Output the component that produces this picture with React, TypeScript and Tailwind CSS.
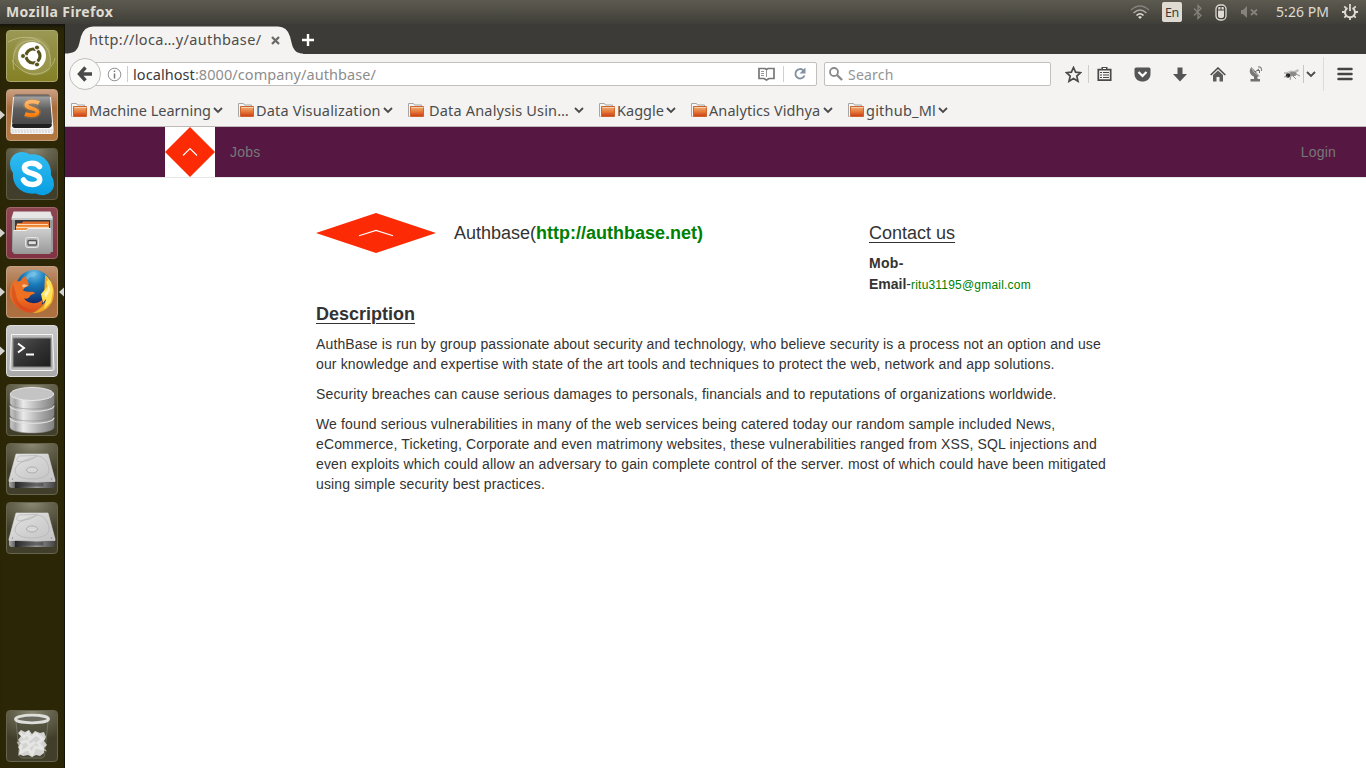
import type { ReactNode } from "react";

const ui = "font-['Noto_Sans',sans-serif]";

function Tile({ bg, border, left, right, children }: { bg: string; border: string; left?: boolean; right?: boolean; children: ReactNode }) {
  return (
    <div className="relative flex h-[52px] w-[65px] shrink-0 pl-[6px]">
      {left && (
        <svg className="absolute left-0 top-[21px]" width="5" height="10" viewBox="0 0 5 10"><path d="M0 0.5 5 5 0 9.5Z" fill="#d4d2cc" /></svg>
      )}
      {right && (
        <svg className="absolute right-[1px] top-[21px]" width="5" height="10" viewBox="0 0 5 10"><path d="M5 .5 0 5l5 4.500Z" fill="#d4d2cc" /></svg>
      )}
      <div className={`h-[52px] w-[52px] overflow-hidden rounded-[4px] border ${border} ${bg}`}>
        <svg className="-m-px block" width="52" height="52" viewBox="0 0 52 52">{children}</svg>
      </div>
    </div>
  );
}

const dark = "bg-[radial-gradient(ellipse_90%_60%_at_50%_0%,#8b8974_0%,#67654f_40%,#413f2b_100%)]";

function Drive({ id }: { id: string }) {
  return (
    <g>
      <defs>
        <linearGradient id={id + "a"} x1="0" y1="0" x2="1" y2="1"><stop offset="0" stopColor="#e6e6e6" /><stop offset=".5" stopColor="#d2d2d2" /><stop offset="1" stopColor="#c4c4c4" /></linearGradient>
        <linearGradient id={id + "b"}><stop offset="0" stopColor="#aaa" /><stop offset=".12" stopColor="#666" /><stop offset=".14" stopColor="#222" /><stop offset=".6" stopColor="#999" /><stop offset="1" stopColor="#444" /></linearGradient>
      </defs>
      <path d="M3 38h46v4q0 3-3 3H6q-3 0-3-3Z" fill={`url(#${id}b)`} />
      <path d="M9.500 40h28v3.500h-28Z" fill="#333" opacity=".5" />
      <path d="M10 11h32l7 26v1.500H3V37Z" fill={`url(#${id}a)`} stroke="#dedede" strokeWidth=".6" />
      <path d="M13 13q-4 4-1 5.500 4 .5 8-1.500t9-2.500l2-2Z" fill="none" stroke="#b5b5b5" strokeWidth=".7" />
      <path d="M9 28c0-6 7-10 15-11l7-4c7 0 12 7 12 15 0 5-8 8-17 8S9 33 9 28Z" fill="none" stroke="#b5b5b5" strokeWidth=".8" />
      <ellipse cx="26" cy="27" rx="5.500" ry="3" fill="#d8d8d8" stroke="#a5a5a5" strokeWidth=".8" />
      <circle cx="6.500" cy="36" r=".7" fill="#888" /><circle cx="45.500" cy="36" r=".7" fill="#888" />
    </g>
  );
}

function Launcher() {
  return (
    <nav className="flex w-[65px] shrink-0 flex-col gap-[7px] border-r border-[#15140a] bg-[#2b2706] pb-[6px] pt-[6px] shadow-[inset_0_6px_5px_-4px_#111]">
      <Tile bg="bg-[linear-gradient(#9a9854,#858025)]" border="border-[#aaa76a]">
        <path d="M7 24C9 4 35 0 44 18v22C32 50 12 47 7 24Z" fill="#b5b27a" opacity=".35" />
        <g fill="none" stroke="#cfcfa0" strokeWidth="1" opacity=".6">
          <path d="M2 12c22-12 46 0 42 24M8 40C4 20 14 6 34 12M49 28C45 46 20 52 6 30" />
        </g>
        <circle cx="26" cy="26" r="14" fill="#fff" />
        <circle cx="27" cy="26" r="7" fill="none" stroke="#57541c" strokeWidth="3.200" />
        <path d="M27 26h-9M27 26l5-8M27 26l5 8" stroke="#fff" strokeWidth="1.500" />
        <g fill="#57541c" stroke="#fff" strokeWidth="1"><circle cx="17" cy="26" r="2.500" /><circle cx="31" cy="17.500" r="2.500" /><circle cx="31" cy="34.500" r="2.500" /></g>
      </Tile>
      <Tile left bg="bg-[linear-gradient(#caa083,#a96d3b_35%,#b47841)]" border="border-[#c39a77]">
        <defs><linearGradient id="sub" x1="0" y1="0" x2="0" y2="1"><stop stopColor="#555" /><stop offset=".1" stopColor="#9c9c9c" /><stop offset=".5" stopColor="#5e5e5e" /><stop offset="1" stopColor="#484848" /></linearGradient><linearGradient id="ess" x1="0" y1="0" x2="0" y2="1"><stop stopColor="#ffb86b" /><stop offset="1" stopColor="#ff7e08" /></linearGradient></defs>
        <path d="M7 8h38l2.500 32v3q0 2-2 2h-39q-2 0-2-2v-3Z" fill="#f4f4f4" />
        <path d="M5.500 41h41M6 43h40" stroke="#bbb" strokeWidth=".8" strokeDasharray="2 1" />
        <path d="M8 31h36l2 5q-1 3-3 3H9q-3 0-3-3Z" fill="#202020" />
        <path d="M10 5.500h32q2 0 2 2L46 33q0 2-2 2H8q-2 0-2-2L8 7.500q0-2 2-2Z" fill="url(#sub)" />
        <path d="M33 14c-3-1.500-11-2.500-12.500 1-1.500 5 12 4 11 8.500-1 4-10 2.500-12.500 1.500" fill="none" stroke="#ff9c35" strokeWidth="7" opacity=".2" />
        <path d="M33 14c-3-1.500-11-2.500-12.500 1-1.500 5 12 4 11 8.500-1 4-10 2.500-12.500 1.500" fill="none" stroke="url(#ess)" strokeWidth="3.800" />
      </Tile>
      <Tile bg={dark} border="border-[#5f5c44]">
        <defs><linearGradient id="sky" x1="0" y1="0" x2="0" y2="1"><stop stopColor="#32bdf2" /><stop offset="1" stopColor="#079ee2" /></linearGradient></defs>
        <path d="M16 4q5 0 8 2.500C37 5 46 15 45 27q3 4 3 9c0 9-10 14-18 9.500C16 47 6 38 7 25q-3-4-3-9C4 9 9 4 16 4Z" fill="url(#sky)" />
        <path d="M33.500 18.500C30 14 17.500 14 18.500 20.500c.8 6 15.200 4 15.200 11 0 6.500-13 6.500-16.200.5" fill="none" stroke="white" strokeWidth="5.500" strokeLinecap="round" />
      </Tile>
      <Tile left bg="bg-[linear-gradient(#8d4651,#803242)]" border="border-[#a26671]">
        <defs><linearGradient id="cab" x1="0" y1="0" x2="0" y2="1"><stop stopColor="#d0d0d0" /><stop offset="1" stopColor="#989898" /></linearGradient></defs>
        <path d="M6 9h41v36H6Z" fill="#9a9a9a" /><path d="m5.500 11 2-6.500h37L46.500 11Z" fill="#e6e6e6" /><path d="M5.500 11h41v2h-41Z" fill="#c8c8c8" />
        <path d="M9 13h35v14H9Z" fill="#383838" /><path d="M11 16h5l1-1.500h26V26H10Z" fill="#e3702d" /><path d="M10 18.500h33V26H10Z" fill="#f3933c" /><path d="M11 17.500h31M10 20.500h33" stroke="#fbd9b5" />
        <path d="M7 23h13l2-2h23v24q0 2-2 2H9q-2 0-2-2Z" fill="url(#cab)" /><path d="M8 23.500h12.500l2-2H44" stroke="#eee" fill="none" />
        <rect x="19.500" y="30.500" width="13" height="10" rx="2" fill="#bbb" stroke="#e5e5e5" /><rect x="22" y="33.500" width="8.500" height="4.500" rx="1" fill="#e0e0e0" stroke="#555" strokeWidth="1.300" />
      </Tile>
      <Tile left right bg="bg-[linear-gradient(#bf9473,#a96b3b_45%,#ad7040)]" border="border-[#c59d7f]">
        <defs><radialGradient id="globe" cx=".5" cy=".1" r=".8"><stop stopColor="#6fbfe9" /><stop offset=".4" stopColor="#1779b8" /><stop offset="1" stopColor="#122c6c" /></radialGradient><linearGradient id="fox" x1="0" y1="0" x2="0" y2="1"><stop stopColor="#e8702a" /><stop offset=".6" stopColor="#f0701f" /><stop offset="1" stopColor="#dc4a1d" /></linearGradient></defs>
        <circle cx="28" cy="22" r="18" fill="url(#globe)" />
        <path d="M22 8q6-4 9 0l-3 3-4 0-2 3-3-2Z" fill="#7cc5e8" opacity=".6" />
        <path d="M39 9c6 5 9 11 9 18 0 12-9 20-21 20 8-4 14-10 15-19l-4 5Z" fill="#f5a623" />
        <path d="m39 8 6 8 2 8-2 12-7 7 2-10-3 4-2-9 7-8-2-4 2-2Z" fill="#ffe056" />
        <path d="m41 15 3 9-4 8-2-4 4-5Z" fill="#fff6b5" />
        <path d="M10 13q0 2 2 2.500l3-1q1-3 5-5 0 4 2 6l1 4c-2 1-5 2-6 5l3 1c5 1 7-1 9 2l-3 1c-3 1-2 5-8 4 4 6 14 6 19 1-1 8-7 12-12 13C15 47 4 37 4 27q0-9 6-14Z" fill="url(#fox)" />
        <path d="M7 18q-3 9 0 16 7 12 20 10c-10-1-16-7-17-16" fill="#ca3f20" opacity=".5" />
        <path d="M16 19q3-2 6 1l-5 1.500Z" fill="#fbc18b" />
      </Tile>
      <Tile left bg="bg-[linear-gradient(#c9c9c9,#a8a8a8)]" border="border-[#dddddd]">
        <defs><linearGradient id="term" x1="0" y1="0" x2="1" y2="1"><stop stopColor="#555" /><stop offset=".5" stopColor="#333" /><stop offset="1" stopColor="#1d1d1d" /></linearGradient></defs>
        <path d="M5.500 9.500h41l1.500 34q0 2-2 2H6q-2 0-2-2Z" fill="#bbb" stroke="#f4f4f4" /><rect x="7" y="13" width="38" height="29" fill="url(#term)" stroke="#8a8a8a" />
        <path d="m12 18.500 6 4.500-6 4.500" fill="none" stroke="#fff" strokeWidth="2" /><path d="M20 29.500h8" stroke="#fff" strokeWidth="1.800" />
      </Tile>
      <Tile bg={dark} border="border-[#66634d]">
        <defs><linearGradient id="disk"><stop stopColor="#c8c8c8" /><stop offset=".12" stopColor="#a8a8a8" /><stop offset=".3" stopColor="#eaeaea" /><stop offset=".65" stopColor="#b0b0b0" /><stop offset="1" stopColor="#808080" /></linearGradient></defs>
        <g fill="url(#disk)" stroke="#858585" strokeWidth=".5">
          <path d="M4 34v9c0 8 44 8 44 0v-9Z" /><path d="M4 22v9c0 8 44 8 44 0v-9Z" /><path d="M4 10v9c0 8 44 8 44 0v-9Z" />
        </g>
        <path d="M4 21.500c0 8 44 8 44 0M4 33.500c0 8 44 8 44 0" fill="none" stroke="#dedede" strokeWidth="1.200" />
        <ellipse cx="26" cy="10" rx="21.500" ry="6.500" fill="#c4c4c4" stroke="#e8e8e8" />
      </Tile>
      <Tile bg={dark} border="border-[#66634d]"><Drive id="d1" /></Tile>
      <Tile bg={dark} border="border-[#66634d]"><Drive id="d2" /></Tile>
      <div className="mt-auto">
        <Tile bg={dark} border="border-[#66634d]">
          <path d="M10 11h32l-3.500 35q-1 2-3 2h-19q-2 0-3-2Z" fill="#4c4b3b" opacity=".6" stroke="#96968c" strokeWidth=".8" />
          <path d="m12 23 3-3 4 2 4-2 3 4 3-3 5 2 4-1 2 5-2 4 3 4-3 3v5l-4 3-4-1-4 2-4-2-5 1-4-2 1-4-2-3 3-4-3-3 3-4Z" fill="#d2d2d0" />
          <path d="m14 23 4 4 4-4 2 6 6-5 7 5-5 4 5 6-8-2-3 7-4-6-8 5 1-7-2-3 8-2 3 5 5-4" fill="none" stroke="#f2f2f2" strokeWidth="3" opacity=".6" />
          <ellipse cx="26" cy="9" rx="16.500" ry="3.800" fill="#6b6b60" stroke="#dededa" strokeWidth="2.800" />
        </Tile>
      </div>
    </nav>
  );
}

function Folder() {
  return (
    <svg width="17" height="16" viewBox="0 0 17 16" className="shrink-0">
      <defs><linearGradient id="folder" x1="0" y1="0" x2="0" y2="1"><stop stopColor="#efb27d" /><stop offset=".5" stopColor="#e77b3b" /><stop offset="1" stopColor="#cc3d12" /></linearGradient></defs>
      <path d="M1.500 14.500h-1V1.500h5l1 1.500h7v2" fill="#f7f7f7" stroke="#a6a6a4" />
      <path d="M2.500 4.500h13v10h-13Z" fill="url(#folder)" stroke="#cd6430" /><path d="M3.500 5.500h12" stroke="#f5ceaa" />
    </svg>
  );
}

function Chevron() {
  return <svg width="10" height="7" viewBox="0 0 10 7" className="shrink-0"><path d="m1 1 4 4 4-4" fill="none" stroke="#4a4a4a" strokeWidth="1.800" /></svg>;
}

function Bookmark({ label, cell, text, pad = "pl-px" }: { label: string; cell: string; text: string; pad?: string }) {
  return (
    <div className={`flex shrink-0 items-center ${cell}`}>
      <Folder />
      <span className={`shrink-0 whitespace-nowrap pt-px ${pad} ${text}`}>{label}</span>
      <Chevron />
    </div>
  );
}

function Cell({ w, children }: { w: string; children: ReactNode }) {
  return <div className={`flex h-full shrink-0 items-center justify-center ${w}`}>{children}</div>;
}

function TopBar() {
  return (
    <header className={`flex h-6 items-center bg-[linear-gradient(#5d5b50,#3f3e38)] pl-[6px] text-[#dfdbd2] ${ui}`}>
      <span className="-mt-0.5 text-[14px] font-bold tracking-[0.38px]">Mozilla Firefox</span>
      <div className="ml-auto flex h-full w-[238px] shrink-0 items-center">
        <Cell w="w-[24px]">
          <svg width="20" height="16" viewBox="0 0 20 16" fill="none" strokeWidth="1.500"><path d="M1 6q9-8 18 0" stroke="#85837b" /><path d="M3.500 9q6.500-6 13 0" stroke="#aaa79f" /><path d="M6.500 11.500q3.500-3.500 7 0" stroke="#dfdbd2" /><path d="m8 13 2-1 2 1-2 2Z" fill="#dfdbd2" /></svg>
        </Cell>
        <div className="ml-[10px] flex h-[20px] w-[20px] items-center justify-center rounded-[2px] bg-[#dfdbd2] pt-0.5 text-[12.500px] tracking-[-0.3px] text-[#3c3b37]">En</div>
        <Cell w="w-[32px]"><svg width="10" height="16" viewBox="0 0 10 16"><path d="m1 4.500 7 7-3 3v-13l3 3-7 7" fill="none" stroke="#85837b" strokeWidth="1.300" /></svg></Cell>
        <Cell w="w-[14px]"><svg width="12" height="17" viewBox="0 0 12 17"><rect x="1" y="1" width="10" height="15" rx="4" fill="#3f3e38" stroke="#dfdbd2" strokeWidth="1.300" /><path d="M3 6.500h6V12q0 2-3 2t-3-2ZM3.500 3h2v2.500H3ZM6.500 3h2L9 5.500H6.500Z" fill="#dfdbd2" /></svg></Cell>
        <Cell w="w-[42px]"><svg width="18" height="12" viewBox="0 0 18 12"><path d="M1 4h2l4-4v12L3 8H1Z" fill="#85837b" /><path d="m11 3.500 6 5.500m0-5.500L11 9" stroke="#85837b" strokeWidth="1.700" /></svg></Cell>
        <span className="-mt-0.5 ml-[6px] w-[62px] whitespace-nowrap text-[14px] tracking-[0.08px]">5:26 PM</span>
        <Cell w="w-[24px]"><svg width="16" height="16" viewBox="0 0 16 16" fill="none" stroke="#dfdbd2"><path d="M5.500 4a5 5 0 1 0 5 0" strokeWidth="2" /><path d="M8 0v7" strokeWidth="1.800" /><path d="M0 8h3m10 0h3M8 13v3M2.300 2.300l2 2m7.400 0 2-2M2.300 13.700l2-2m7.400 0 2 2" strokeWidth="1.800" /></svg></Cell>
      </div>
    </header>
  );
}

function Browser() {
  return (
    <div className={`flex h-[103px] flex-col border-b border-[#bdbbb7] bg-[#f4f3f1] text-[#4c4c4c] ${ui}`}>
      <div className="flex h-[30px] shrink-0 bg-[#3c3b37]">
        <div className="relative flex h-[30px] w-[236px] items-center">
          <svg className="absolute left-0 top-0" width="240" height="30" viewBox="0 0 240 30"><path d="M0 29.500c8 0 12-2 14-9l2-8Q19 2.500 28 2.500h185q9 0 12 10l2 8c2 7 6 9 11 9v.5H0Z" fill="#f4f3f1" /></svg>
          <span className="relative ml-[24px] w-[178px] whitespace-nowrap pt-[2px] text-[14.500px] tracking-[0.38px]">http://loca…y/authbase/</span>
          <svg className="relative ml-[4px] mt-[3px]" width="9" height="9" viewBox="0 0 9 9"><path d="m1 1 7 7m0-7L1 8" stroke="#6a6a6a" strokeWidth="2.300" /></svg>
        </div>
        <svg className="mt-[9px]" width="14" height="14" viewBox="0 0 14 14"><path d="M7 1v12M1 7h12" stroke="#fff" strokeWidth="2.400" /></svg>
      </div>
      <div className="flex h-10 shrink-0 items-center">
        <div className="relative z-10 ml-[4px] flex h-[32px] w-[32px] shrink-0 items-center justify-center rounded-full border border-[#c0beba] bg-[#f9f9f8]">
          <svg width="16" height="16" viewBox="0 0 16 16"><path d="M8.500 1.500 2.500 8l6 6.500M3 8h12" fill="none" stroke="#494949" strokeWidth="3.400" /></svg>
        </div>
        <div className="-ml-[8px] flex h-6 w-[724px] shrink-0 items-center rounded-[2px] border border-[#c2c0bd] bg-white">
          <svg className="ml-[13px] shrink-0" width="15" height="15" viewBox="0 0 15 15"><circle cx="7.500" cy="7.500" r="6.300" fill="none" stroke="#8d8d8d" /><path d="M7.500 3.500v1.500M7.500 6.500v5" stroke="#777" strokeWidth="1.500" /></svg>
          <div className="ml-[5px] h-4 w-px shrink-0 bg-[#ccc]" />
          <span className="ml-[5px] whitespace-nowrap pt-px text-[14.500px] tracking-[0.07px] text-[#8d8d8d]"><span className="text-[#3a3a3a]">localhost</span>:8000/company/authbase/</span>
          <div className="ml-auto flex w-[58px] shrink-0 items-center">
            <svg width="17" height="14" viewBox="0 0 17 14"><path d="M1 1.500h6l1.500 1L10 1.500h6v10h-5l-2.500 1.500L6 11.500H1Z" fill="none" stroke="#777" strokeWidth="1.700" /><path d="M8.500 3v7M3 4.500h3M3 6.500h3M3 8.500h3" stroke="#999" /></svg>
            <div className="ml-[8px] h-4 w-px bg-[#d0d0d0]" />
            <svg className="ml-[9px]" width="14" height="14" viewBox="0 0 14 14"><path d="M10.500 3.500a4.700 4.700 0 1 0 1 5" fill="none" stroke="#8392a2" strokeWidth="1.900" /><path d="M12.500.5v6h-6Z" fill="#8392a2" /></svg>
          </div>
        </div>
        <div className="ml-[7px] flex h-6 w-[227px] shrink-0 items-center rounded-[2px] border border-[#c2c0bd] bg-white">
          <svg className="ml-[4px] shrink-0" width="14" height="14" viewBox="0 0 14 14" fill="none" stroke="#8b8b8b"><circle cx="5" cy="5" r="4" strokeWidth="1.800" /><path d="m8 8 5 5" strokeWidth="2.400" /></svg>
          <span className="ml-[5px] text-[14px] tracking-[0.2px] text-[#949494]">Search</span>
        </div>
        <div className="flex h-10 flex-1 items-center text-[#4a4a4a]">
          <div className="w-[13px]" />
          <Cell w="w-[18px]"><svg width="17" height="17" viewBox="0 0 17 17"><path d="m8.500 1.500 2.100 4.700 5 .5-3.800 3.400 1.200 5.200-4.500-2.700L4 15.300l1.200-5.200-3.800-3.400 5-.5Z" fill="none" stroke="#494949" strokeWidth="1.700" /></svg></Cell>
          <div className="ml-[6px] h-[18px] w-px bg-[#d0cecb]" />
          <Cell w="w-[30px]"><svg width="15" height="16" viewBox="0 0 15 16"><path d="M1.300 3.700h12.400v10.500H1.300Z" fill="none" stroke="#494949" strokeWidth="1.700" /><path d="M4.500 1h6v3h-6Z" fill="#494949" /><path d="M6 2.500h3" stroke="#fff" /><path d="M3 6.500h2m1 0h6M3 9h2m1 0h6M3 11.500h2m1 0h6" stroke="#494949" strokeWidth="1.200" /></svg></Cell>
          <Cell w="w-[46px]"><svg width="17" height="15" viewBox="0 0 17 15"><path d="M2 .5h13q1.500 0 1.500 1.500v5c0 10-16 10-16 0V2Q.5.500 2 .5Z" fill="#555" /><path d="m4.500 5 4 4 4-4" fill="none" stroke="#fff" strokeWidth="2.200" /></svg></Cell>
          <Cell w="w-[30px]"><svg width="14" height="15" viewBox="0 0 14 15"><path d="M4.500.5h5V7H14l-7 7.500L0 7h4.500Z" fill="#555" /></svg></Cell>
          <Cell w="w-[46px]"><svg width="16" height="15" viewBox="0 0 16 15"><path d="m.7 8 7.300-7 7.300 7" fill="none" stroke="#4c4c4c" strokeWidth="1.600" /><path d="m3 8 5-4.500L13 8v6.500H9.500V10h-3v4.500H3Z" fill="#5d5d5d" /></svg></Cell>
          <Cell w="w-[30px]"><svg width="14" height="16" viewBox="0 0 14 16"><path d="M2.500 1Q-.8 4.500 2 8.500T10.500 10Z" fill="#777" /><path d="M2.500 1.500q1 5 8 8.500" fill="none" stroke="#bbb" /><path d="m6 6 4-3M8 4.500h2.500V7" stroke="#666" fill="none" /><path d="M9 1q4-.5 3.500 4" fill="none" stroke="#888" strokeWidth="1.200" /><path d="M5 10h3l.8 3H11v2.500H1.500V13H5Z" fill="#707070" /></svg></Cell>
          <Cell w="w-[40px]"><svg width="17" height="13" viewBox="0 0 17 13"><path d="M4 4q5-3 8 0l-4 2ZM7 5l8-4 1 2-6 4Z" fill="#bbb" /><ellipse cx="10" cy="6" rx="3.500" ry="2.200" fill="#8a8a8a" /><circle cx="5" cy="7.500" r="2.200" fill="#222" /><path d="M1 5h4M1 9l4-1m3 0-1 4m3-4 3 3m0-5 4 2" stroke="#777" strokeWidth=".8" /></svg></Cell>
          <div className="-ml-[8px] h-[18px] w-px bg-[#c8c6c3]" />
          <div className="ml-[2px]"><Chevron /></div>
          <div className="ml-[7px] h-[34px] w-px bg-[#dedcda]" />
          <svg className="ml-[13px]" width="16" height="14" viewBox="0 0 16 14"><path d="M1.500 2h13M1.500 7h13M1.500 12h13" stroke="#444" strokeWidth="2.500" strokeLinecap="round" /></svg>
        </div>
      </div>
      <div className="flex h-8 shrink-0 items-center pl-[6px] text-[14.500px]">
        <Bookmark label="Machine Learning" cell="w-[167px]" text="w-[125px] tracking-[-0.02px]" />
        <Bookmark label="Data Visualization" cell="w-[170px]" text="w-[128px] tracking-[0.18px]" />
        <Bookmark label="Data Analysis Usin…" cell="w-[191px]" text="w-[149px] tracking-[0.18px]" pad="pl-[4px]" />
        <Bookmark label="Kaggle" cell="w-[92px]" text="w-[50px] tracking-[0.02px]" />
        <Bookmark label="Analytics Vidhya" cell="w-[157px]" text="w-[115px] tracking-[0.08px]" />
        <Bookmark label="github_Ml" cell="w-[105px]" text="w-[73px] tracking-[0.22px]" />
      </div>
    </div>
  );
}

function Page() {
  return (
    <main className="flex-1 bg-white font-['Liberation_Sans',Arial,sans-serif] text-[14px] leading-5 text-[#333]">
      <div className="flex h-[51px] items-center border-b border-[#e7e7e7] bg-[#561843] pl-[100px] pr-[30px] text-[#777]">
        <svg width="50" height="50" viewBox="0 0 50 50"><path d="M0 0h50v50H0Z" fill="#fff" /><path d="m25 0 25 25-25 25L0 25Z" fill="#fc2a05" /><path d="m18 28.500 7-7 7 7" fill="none" stroke="#fff" strokeWidth="1.200" /></svg>
        <span className="ml-[15px] tracking-[0.2px]">Jobs</span>
        <span className="ml-auto tracking-[0.2px]">Login</span>
      </div>
      <div className="ml-[251px] w-[795px] whitespace-nowrap pt-[35px]">
        <div className="flex h-[90px] items-start">
          <svg width="120" height="40" viewBox="0 0 120 40"><path d="m60 0 60 20-60 20L0 20Z" fill="#fc2a05" /><path d="m43 22.800 17-5.300 17 5.300" fill="none" stroke="#fff" strokeWidth="1.200" /></svg>
          <h1 className="ml-[18px] w-[415px] pt-[10px] text-[18px] leading-5">Authbase(<b className="text-[#008000]">http://authbase.net)</b></h1>
          <div className="pt-[10px]">
            <h2 className="text-[18px] leading-5 underline decoration-1 underline-offset-[3px]">Contact us</h2>
            <div className="mt-[10px] font-bold tracking-[0.3px]">Mob-</div>
            <div className="mt-px"><b>Email</b>-<span className="text-[12px] tracking-[0.2px] text-[#008000]">ritu31195@gmail.com</span></div>
          </div>
        </div>
        <h2 className="pt-px text-[18px] font-bold leading-5 underline decoration-1 underline-offset-[3px]">Description</h2>
        <div className="mt-[10px] flex flex-col gap-[10px] tracking-[0.133px]">
          <p>AuthBase is run by group passionate about security and technology, who believe security is a process not an option and use<br />our knowledge and expertise with state of the art tools and techniques to protect the web, network and app solutions.</p>
          <p>Security breaches can cause serious damages to personals, financials and to reputations of organizations worldwide.</p>
          <p>We found serious vulnerabilities in many of the web services being catered today our random sample included News,<br />eCommerce, Ticketing, Corporate and even matrimony websites, these vulnerabilities ranged from XSS, SQL injections and<br />even exploits which could allow an adversary to gain complete control of the server. most of which could have been mitigated<br />using simple security best practices.</p>
        </div>
      </div>
    </main>
  );
}

export default function App() {
  return (
    <div className="flex h-[768px] w-[1366px] flex-col overflow-hidden">
      <TopBar />
      <div className="flex min-h-0 flex-1">
        <Launcher />
        <div className="flex min-w-0 flex-1 flex-col"><Browser /><Page /></div>
      </div>
    </div>
  );
}
